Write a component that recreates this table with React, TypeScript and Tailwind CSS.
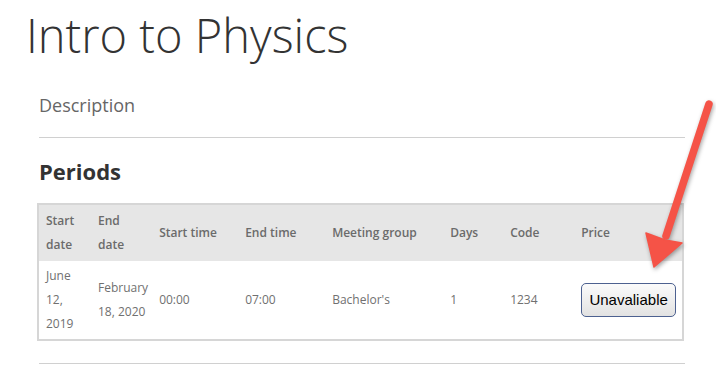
const cols = [
  { label: "Start date", w: 53 },
  { label: "End date", w: 60 },
  { label: "Start time", w: 86 },
  { label: "End time", w: 87 },
  { label: "Meeting group", w: 118 },
  { label: "Days", w: 60 },
  { label: "Code", w: 71 },
  { label: "Price", w: 109 },
];

const row = ["June 12, 2019", "February 18, 2020", "00:00", "07:00", "Bachelor's", "1", "1234"];

function Arrow() {
  return (
    <svg
      className="absolute left-0 top-0 pointer-events-none"
      width="716"
      height="381"
      style={{ filter: "drop-shadow(1px 2px 2px rgba(0,0,0,0.35))" }}
    >
      <line x1="709" y1="104" x2="666" y2="236" stroke="#f55347" strokeWidth="7.5" strokeLinecap="round" />
      <polygon points="654,267 646,233 665,240 682,243" fill="#f55347" stroke="#f55347" strokeWidth="1.5" strokeLinejoin="round" />
    </svg>
  );
}

export default function App() {
  return (
    <div className="relative w-[716px] h-[381px] bg-white overflow-hidden font-['Open_Sans',sans-serif]">
      <h1 className="absolute left-[26px] top-[3px] text-[47px] leading-[64px] font-light text-[#333]">Intro to Physics</h1>

      <div className="pl-[39px] pt-[90px] w-[685px]">
        <div className="text-[18px] leading-[30px] text-[#666]">Description</div>
        <div className="mt-[17px] border-t border-[#d0d0d0]" />

        <h2 className="mt-[18px] text-[22px] leading-[30px] font-bold text-[#333]">Periods</h2>

        <table className="mt-[17px] -ml-[2px] border-2 border-[#d6d6d6] border-collapse table-fixed text-[12px] leading-[24px]">
          <thead>
            <tr className="bg-[#e6e6e6]">
              {cols.map((c) => (
                <th
                  key={c.label}
                  style={{ width: c.w }}
                  className="text-left align-middle font-semibold text-[#6b6b6b] pl-[7px] pr-[4px] py-[4px]"
                >
                  {c.label}
                </th>
              ))}
            </tr>
          </thead>
          <tbody>
            <tr className="bg-white">
              {row.map((v, i) => (
                <td key={i} className="align-middle text-[#707070] pl-[7px] pr-[4px] py-[3px]">
                  {v}
                </td>
              ))}
              <td className="align-middle pl-[7px] py-[3px]">
                <button className="w-[95px] h-[34px] rounded-[5px] border border-[#4d6190] bg-gradient-to-b from-[#fbfbfb] to-[#e2e2e2] font-['Liberation_Sans',Arial,sans-serif] text-[15px] text-black">
                  Unavaliable
                </button>
              </td>
            </tr>
          </tbody>
        </table>

        <div className="mt-[22px] border-t border-[#d0d0d0]" />
      </div>

      <Arrow />
    </div>
  );
}
